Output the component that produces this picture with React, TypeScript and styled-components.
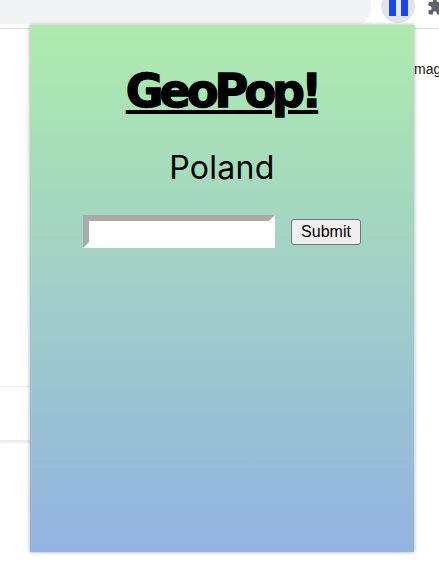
import React from "react";
import styled, { createGlobalStyle } from "styled-components";

const Global = createGlobalStyle`
  html, body { margin: 0; padding: 0; background: #fff; }
  body { width: 439px; height: 573px; overflow: hidden; font-family: "Liberation Sans", Arial, sans-serif; }
`;

const Page = styled.div`
  position: relative;
  width: 439px;
  height: 573px;
  overflow: hidden;
  background: #fff;
`;

const Toolbar = styled.header`
  display: flex;
  align-items: flex-start;
  height: 28px;
  border-bottom: 1px solid #e2e2e5;
  box-sizing: content-box;
  overflow: hidden;
`;

const Omnibox = styled.div`
  flex: none;
  width: 371px;
  height: 24px;
  background: #f1f3f4;
  border-bottom-right-radius: 14px;
`;

const ExtensionBadge = styled.div`
  flex: none;
  display: flex;
  justify-content: center;
  gap: 5px;
  width: 34px;
  height: 34px;
  margin: -11px 0 0 10px;
  border-radius: 50%;
  background: #e3e4e7;
`;

const PauseBar = styled.span`
  width: 7px;
  height: 27px;
  background: #1a45ee;
`;

const PuzzleIcon = styled.svg`
  width: 18px;
  height: 18px;
  margin: -2px 0 0 12px;
  flex: none;
  fill: #5f6368;
`;

const PageText = styled.p`
  margin: 0;
  position: absolute;
  left: 414px;
  top: 61px;
  font-size: 14px;
  line-height: 16px;
  color: #222;
`;

const SideCard = styled.div`
  position: absolute;
  left: -10px;
  top: 386px;
  width: 40px;
  height: 53px;
  background: #fff;
  border: 1px solid #eee;
  box-shadow: 0 1px 3px rgba(0, 0, 0, 0.12);
`;

const Popup = styled.main`
  position: absolute;
  left: 30px;
  top: 25px;
  width: 384px;
  height: 527px;
  display: flex;
  flex-direction: column;
  align-items: center;
  background: linear-gradient(180deg, #aeebad 0%, #92b3e2 100%);
  box-shadow: 0 0 4px rgba(0, 0, 0, 0.35);
`;

const Title = styled.h1`
  margin: 33px 0 0;
  font-family: "DejaVu Sans", Lato, sans-serif;
  font-weight: 700;
  font-size: 46px;
  line-height: 66px;
  letter-spacing: -3.9px;
  color: #000;
  -webkit-text-stroke: 1.4px #000;
  text-decoration: underline;
  text-decoration-thickness: 4px;
  text-underline-offset: 3px;
`;

const Country = styled.h2`
  margin: 22px 0 0;
  font-family: Inter, Lato, sans-serif;
  font-weight: 400;
  font-size: 32px;
  letter-spacing: 0.3px;
  line-height: 44px;
  color: #000;
`;

const AnswerForm = styled.form`
  display: flex;
  align-items: center;
  gap: 16px;
  margin: 25px 0 0;
`;

const AnswerInput = styled.input`
  box-sizing: border-box;
  width: 192px;
  height: 33px;
  padding: 0 4px;
  background: #fff;
  border-style: solid;
  border-width: 6px;
  border-color: #aaa #fff #fff #aaa;
  outline: none;
`;

const SubmitButton = styled.button`
  width: 70px;
  height: 26px;
  padding: 0;
  font-family: "Liberation Sans", Arial, sans-serif;
  font-size: 16px;
  color: #000;
  background: #efefef;
  border: 1px solid #767676;
  border-radius: 3px;
`;

export default function App() {
  return (
    <Page>
      <Global />
      <Toolbar>
        <Omnibox />
        <ExtensionBadge>
          <PauseBar />
          <PauseBar />
        </ExtensionBadge>
        <PuzzleIcon viewBox="0 0 24 24">
          <path d="M20.5 11H19V7a2 2 0 0 0-2-2h-4V3.5a2.5 2.5 0 0 0-5 0V5H4a2 2 0 0 0-2 2v3.8h1.5a2.7 2.7 0 0 1 0 5.4H2V20a2 2 0 0 0 2 2h3.8v-1.5a2.7 2.7 0 0 1 5.4 0V22H17a2 2 0 0 0 2-2v-4h1.5a2.5 2.5 0 0 0 0-5z" />
        </PuzzleIcon>
      </Toolbar>
      <PageText>mag</PageText>
      <SideCard />
      <Popup>
        <Title>GeoPop!</Title>
        <Country>Poland</Country>
        <AnswerForm onSubmit={(e) => e.preventDefault()}>
          <AnswerInput type="text" />
          <SubmitButton type="submit">Submit</SubmitButton>
        </AnswerForm>
      </Popup>
    </Page>
  );
}
